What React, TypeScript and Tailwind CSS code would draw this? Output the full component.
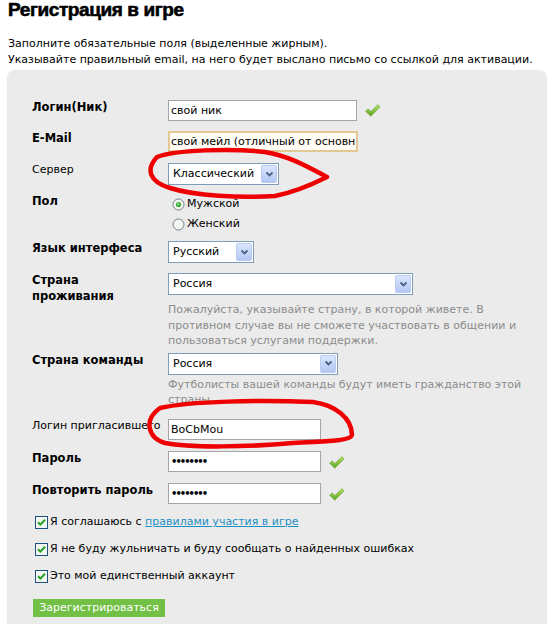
import React from "react";

const F = { fontFamily: '"DejaVu Sans", Verdana, sans-serif' };

function Check() {
  return (
    <svg width="17" height="15" viewBox="0 0 17 15" className="shrink-0">
      <defs>
        <linearGradient id="cg" x1="0" y1="0" x2="0" y2="1">
          <stop offset="0" stopColor="#b6e06a" />
          <stop offset="1" stopColor="#5aa51c" />
        </linearGradient>
      </defs>
      <path d="M1.5 8.2 L4.2 5.8 L6.8 8.6 L14 1.5 L16 4 L6.8 13.2 Z" fill="url(#cg)" stroke="#6aa83a" strokeWidth="0.6" />
    </svg>
  );
}

function Arrow() {
  return (
    <span className="flex h-full w-[16px] items-center justify-center rounded-[2px] border border-[#b8cbf2] bg-gradient-to-b from-[#dbe6fd] to-[#b3c7f3]">
      <svg width="9" height="7" viewBox="0 0 9 7">
        <path d="M1.5 1.5 L4.5 4.5 L7.5 1.5" fill="none" stroke="#4d6185" strokeWidth="1.8" />
      </svg>
    </span>
  );
}

function Select({ w, value }: { w: string; value: string }) {
  return (
    <div className={`flex h-[22px] items-stretch border border-[#7f9db9] bg-white p-[1px] ${w}`}>
      <span className="flex-1 whitespace-nowrap pl-[3px] text-[11px] leading-[18px] text-black">{value}</span>
      <Arrow />
    </div>
  );
}

function Radio({ on }: { on?: boolean }) {
  return (
    <svg width="13" height="13" viewBox="0 0 13 13" className="shrink-0">
      <circle cx="6.5" cy="6.5" r="5.5" fill="#f4f4f0" stroke="#6f7f8f" strokeWidth="1" />
      {on && <circle cx="6.5" cy="6.5" r="2.6" fill="#3fae3f" />}
      {on && <circle cx="6" cy="6" r="1" fill="#9be39b" />}
    </svg>
  );
}

function Box() {
  return (
    <svg width="13" height="13" viewBox="0 0 13 13" className="shrink-0">
      <rect x="0.5" y="0.5" width="12" height="12" fill="#f4f4f0" stroke="#1c5180" />
      <path d="M3 6.3 L5.3 8.6 L10 3.8" fill="none" stroke="#21a121" strokeWidth="2" />
    </svg>
  );
}

function Label({ children, bold = true }: { children: React.ReactNode; bold?: boolean }) {
  return (
    <div
      className={`-mt-[1px] w-[136px] shrink-0 whitespace-nowrap leading-[16px] text-black ${
        bold ? "text-[11.5px] font-bold" : "text-[11px]"
      }`}
    >
      {children}
    </div>
  );
}

function TextInput({ w, value, dots }: { w: string; value?: string; dots?: boolean }) {
  return (
    <div
      className={`h-[21px] overflow-hidden whitespace-nowrap border border-[#a5a5a5] bg-white pl-[2px] text-[11px] leading-[19px] text-black ${w}`}
    >
      {dots ? <span className="text-[10px] font-bold tracking-[-2px]">••••••••</span> : value}
    </div>
  );
}

export default function App() {
  return (
    <div className="relative h-[624px] w-[560px] overflow-hidden bg-white text-black" style={F}>
      <h1
        className="pl-[8px] text-[19px] font-bold leading-[20px] tracking-[-0.4px] text-black [-webkit-text-stroke:0.6px_#000]"
        style={{ fontFamily: '"Liberation Sans", Arial, sans-serif' }}
      >
        Регистрация в игре
      </h1>
      <div className="mt-[16px] whitespace-nowrap pl-[8px] text-[11px] leading-[16px]">
        <div>Заполните обязательные поля (выделенные жирным).</div>
        <div>Указывайте правильный email, на него будет выслано письмо со ссылкой для активации.</div>
      </div>

      <div className="ml-[7px] mt-[2px] w-[540px] rounded-[8px] bg-[#ebebeb] pb-[20px] pl-[25px] pt-[30px]">
        {/* Login */}
        <div className="flex h-[21px] items-start">
          <Label>Логин(Ник)</Label>
          <TextInput w="w-[189px]" value="свой ник" />
          <div className="ml-[7px] mt-[3px]">
            <Check />
          </div>
        </div>
        {/* Email */}
        <div className="mt-[10px] flex h-[21px] items-start">
          <Label>E-Mail</Label>
          <div className="h-[21px] w-[190px] overflow-hidden whitespace-nowrap border-2 border-[#e2c994] bg-[#fffdf6] pl-[1px] text-[11px] leading-[17px]">
            свой{" "}
            <span className="underline decoration-[#e05050] decoration-wavy decoration-1 underline-offset-2">мейл</span>{" "}
            (отличный от основн
          </div>
        </div>
        {/* Server */}
        <div className="mt-[11px] flex h-[22px] items-start">
          <Label bold={false}>Сервер</Label>
          <Select w="w-[111px]" value="Классический" />
        </div>
        {/* Gender */}
        <div className="mt-[9px] flex items-start">
          <Label>Пол</Label>
          <div className="flex flex-col">
            <div className="flex h-[20px] items-center gap-[2px] pl-[4px] text-[11px]">
              <Radio on />
              <span>Мужской</span>
            </div>
            <div className="flex h-[20px] items-center gap-[2px] pl-[4px] text-[11px]">
              <Radio />
              <span>Женский</span>
            </div>
          </div>
        </div>
        {/* Language */}
        <div className="mt-[7px] flex h-[21px] items-start">
          <Label>Язык интерфеса</Label>
          <Select w="w-[86px]" value="Русский" />
        </div>
        {/* Country */}
        <div className="mt-[11px] flex items-start">
          <Label>
            Страна
            <br />
            проживания
          </Label>
          <div className="flex w-[360px] flex-col">
            <Select w="w-[245px]" value="Россия" />
            <div className="mt-[7px] whitespace-nowrap text-[11px] leading-[15.5px] text-[#8c8c8c]">
              Пожалуйста, указывайте страну, в которой живете. В
              <br />
              противном случае вы не сможете участвовать в общении и
              <br />
              пользоваться услугами поддержки.
            </div>
          </div>
        </div>
        {/* Team country */}
        <div className="mt-[4px] flex items-start">
          <Label>Страна команды</Label>
          <div className="flex w-[360px] flex-col">
            <Select w="w-[170px]" value="Россия" />
            <div className="mt-[2px] whitespace-nowrap text-[11px] leading-[15.5px] text-[#8c8c8c]">
              Футболисты вашей команды будут иметь гражданство этой
              <br />
              страны
            </div>
          </div>
        </div>
        {/* Referrer */}
        <div className="mt-[11px] flex h-[21px] items-start">
          <Label bold={false}>Логин пригласившего</Label>
          <TextInput w="w-[153px]" value="BoCbMou" />
        </div>
        {/* Password */}
        <div className="mt-[11px] flex h-[21px] items-start">
          <Label>Пароль</Label>
          <TextInput w="w-[153px]" dots />
          <div className="ml-[7px] mt-[4px]">
            <Check />
          </div>
        </div>
        {/* Repeat */}
        <div className="mt-[11px] flex h-[21px] items-start">
          <Label>Повторить пароль</Label>
          <TextInput w="w-[153px]" dots />
          <div className="ml-[7px] mt-[4px]">
            <Check />
          </div>
        </div>

        {/* Checkboxes */}
        <div className="mt-[11px] flex h-[16px] items-center gap-[2px] pl-[3px] text-[11px]">
          <Box />
          <span>
            Я соглашаюсь с{" "}
            <a href="#" className="text-[#1d8fc4] underline">
              правилами участия в игре
            </a>
          </span>
        </div>
        <div className="mt-[11px] flex h-[16px] items-center gap-[2px] pl-[3px] text-[11px]">
          <Box />
          <span>Я не буду жульничать и буду сообщать о найденных ошибках</span>
        </div>
        <div className="mt-[11px] flex h-[16px] items-center gap-[2px] pl-[3px] text-[11px]">
          <Box />
          <span>Это мой единственный аккаунт</span>
        </div>
        <button className="ml-[1px] mt-[14px] h-[18px] w-[132px] whitespace-nowrap bg-[#72c046] text-[11px] leading-[18px] text-white">
          Зарегистрироваться
        </button>
      </div>

      {/* hand-drawn annotations */}
      <svg className="pointer-events-none absolute left-0 top-0" width="560" height="624" viewBox="0 0 560 624">
        <path
          d="M 157 157 C 175 150, 230 148, 265 152 C 290 156, 310 168, 327 177 C 315 183, 295 192, 275 196 C 240 198, 195 196, 170 188 C 150 182, 145 170, 157 157 Z"
          fill="none"
          stroke="#ee0000"
          strokeWidth="4.5"
          strokeLinejoin="round"
        />
        <path
          d="M 160 408 C 190 401, 260 400, 313 402 C 335 405, 352 418, 352 435 C 350 442, 320 441, 293 443 C 250 447, 190 448, 165 443 C 148 438, 143 420, 160 408 Z"
          fill="none"
          stroke="#ee0000"
          strokeWidth="4.5"
          strokeLinejoin="round"
        />
      </svg>
    </div>
  );
}
